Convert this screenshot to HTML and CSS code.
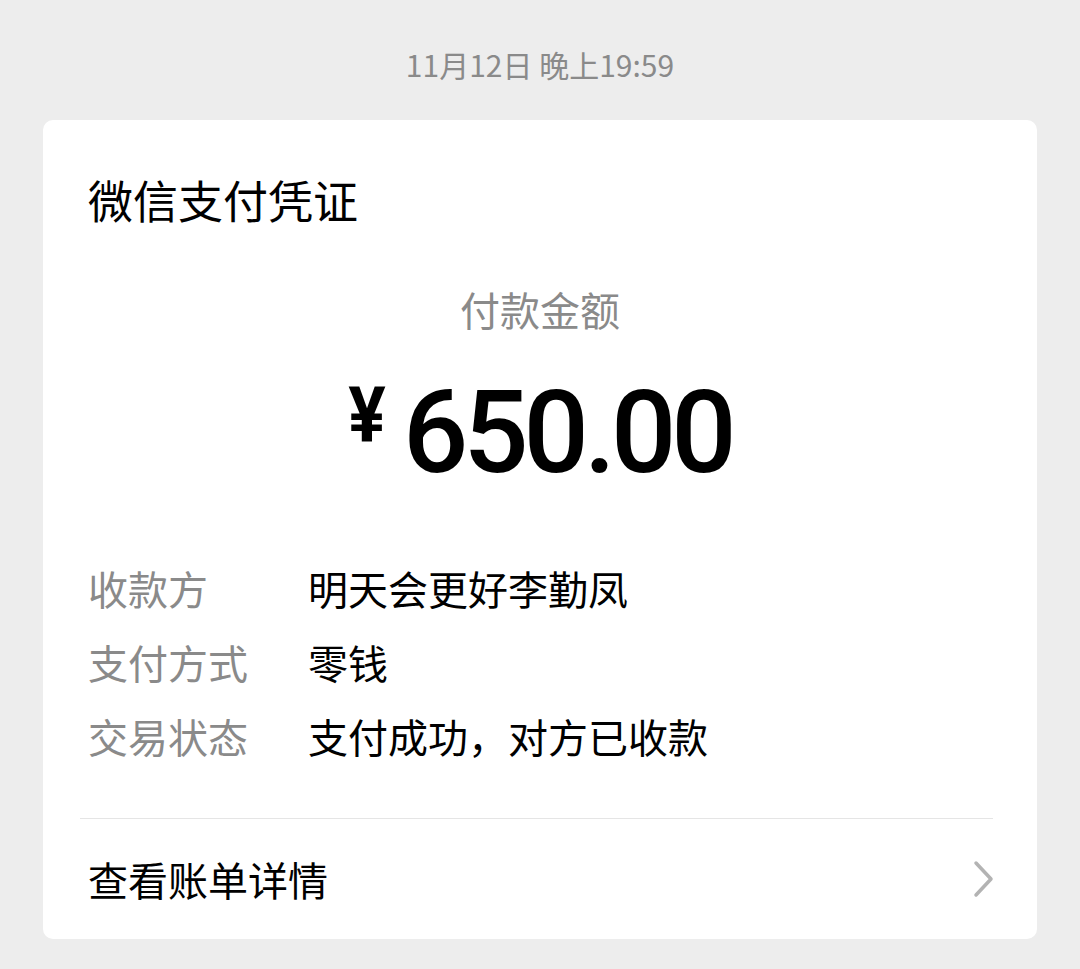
FILE: index.html
```html
<!DOCTYPE html>
<html lang="zh-CN">
<head>
  <meta charset="UTF-8">
  <meta name="viewport" content="width=device-width, initial-scale=1.0">
  <title>微信支付凭证</title>
  <link rel="stylesheet" href="styles.css">
</head>
<body>
  <div class="time">11月12日 晚上19:59</div>

  <section class="card">
    <h1 class="title">微信支付凭证</h1>

    <div class="pay">
      <p class="pay-label">付款金额</p>
      <p class="amount"><span class="yen">¥</span>650.00</p>
    </div>

    <ul class="info">
      <li><span class="key">收款方</span><span class="val">明天会更好李勤凤</span></li>
      <li><span class="key">支付方式</span><span class="val">零钱</span></li>
      <li><span class="key">交易状态</span><span class="val">支付成功，对方已收款</span></li>
    </ul>

    <div class="divider"></div>

    <div class="detail">
      <span>查看账单详情</span>
      <svg class="arrow" width="22" height="38" viewBox="0 0 22 38">
        <polyline points="3,3 18,19 3,35" fill="none" stroke="#b3b3b3" stroke-width="3.5" stroke-linecap="round" stroke-linejoin="round"/>
      </svg>
    </div>
  </section>
</body>
</html>
```

FILE: styles.css
```css
body {
  margin: 0;
  background-color: #ededed;
  font-family: 'Noto Sans CJK SC', 'Noto Sans', sans-serif;
  color: #000;
}

.time {
  height: 120px;
  box-sizing: border-box;
  padding-top: 44px;
  line-height: 40px;
  font-size: 30px;
  color: #8a8a8a;
  text-align: center;
}

.card {
  margin: 0 43px;
  background: white;
  border-radius: 10px;
  padding-top: 50px;
}

.title {
  margin: 0;
  padding-left: 45px;
  font-size: 45px;
  font-weight: normal;
  line-height: 60px;
}

.pay {
  text-align: center;
  margin-top: 54px;
}

.pay-label {
  margin: 0;
  font-size: 40px;
  line-height: 50px;
  color: #8a8a8a;
}

.amount {
  margin: 39px 0 0;
  font-family: Roboto, 'Liberation Sans', sans-serif;
  font-weight: 500;
  font-size: 115px;
  line-height: 120px;
  letter-spacing: -5px;
}

.yen {
  display: inline-block;
  font-size: 70px;
  font-weight: bold;
  line-height: 1;
  vertical-align: 32px;
  margin-right: 17px;
  letter-spacing: 0;
  transform: scaleY(1.1);
}

.info {
  list-style: none;
  margin: 58px 0 0;
  padding: 0 0 0 45px;
}

.info li {
  display: flex;
  font-size: 40px;
  line-height: 74px;
}

.key {
  width: 220px;
  color: #8a8a8a;
}

.divider {
  margin: 45px 44px 0 37px;
  border-top: 1px solid #e5e5e5;
}

.detail {
  height: 120px;
  display: flex;
  align-items: center;
  justify-content: space-between;
  padding: 0 42px 0 45px;
  font-size: 40px;
}
```
